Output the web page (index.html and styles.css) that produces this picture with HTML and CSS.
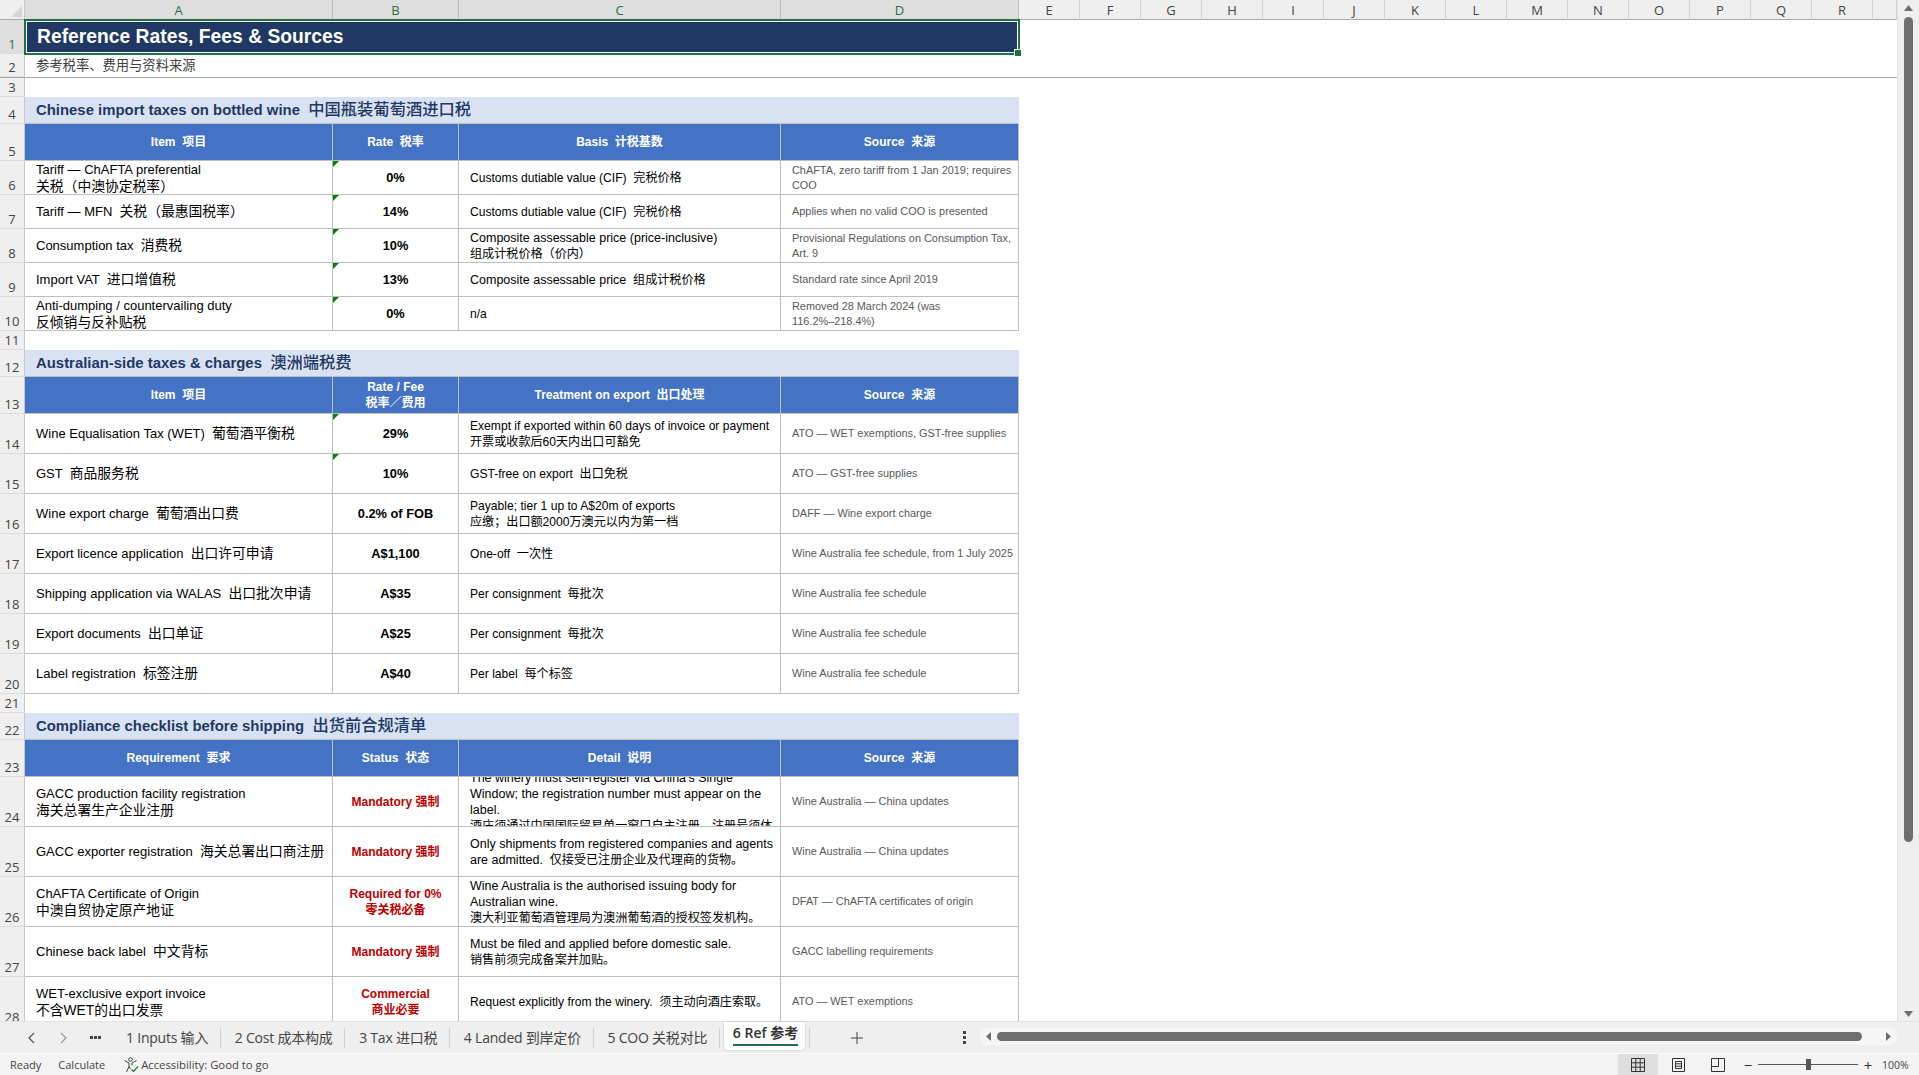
FILE: index.html
```html
<!DOCTYPE html>
<html lang="en">
<head>
  <meta charset="UTF-8">
  <meta name="viewport" content="width=device-width, initial-scale=1.0">
  <title>Reference Rates, Fees &amp; Sources</title>
  <link rel="stylesheet" href="styles.css">
</head>
<body>
  <div class="app">
    <div class="main">
      <div class="sheet">
        <div class="row col-heads">
          <div class="corner"><svg width="11" height="11" viewBox="0 0 11 11"><path d="M11 0V11H0Z" fill="#d4d4d4"/></svg></div>
          <div class="ch active">A</div><div class="ch active">B</div><div class="ch active">C</div><div class="ch active">D</div>
          <div class="ch">E</div><div class="ch">F</div><div class="ch">G</div><div class="ch">H</div><div class="ch">I</div><div class="ch">J</div><div class="ch">K</div><div class="ch">L</div><div class="ch">M</div><div class="ch">N</div><div class="ch">O</div><div class="ch">P</div><div class="ch">Q</div><div class="ch">R</div><div class="ch"></div>
        </div>

        <div class="row h-title">
          <div class="rh active">1</div>
          <div class="cell title"><div>Reference Rates, Fees &amp; Sources</div></div>
        </div>
        <div class="row h-sub">
          <div class="rh">2</div>
          <div class="cell subtitle"><div>参考税率、费用与资料来源</div></div>
        </div>
        <div class="row h-gap"><div class="rh">3</div></div>

        <div class="row h-sec">
          <div class="rh">4</div>
          <div class="cell section"><div>Chinese import taxes on bottled wine  <span class="sec-zh">中国瓶装葡萄酒进口税</span></div></div>
        </div>
        <div class="row h-head">
          <div class="rh">5</div>
          <div class="cell head"><div>Item  项目</div></div>
          <div class="cell head"><div>Rate  税率</div></div>
          <div class="cell head"><div>Basis  计税基数</div></div>
          <div class="cell head"><div>Source  来源</div></div>
        </div>
        <div class="row h-34">
          <div class="rh">6</div>
          <div class="cell item"><div>Tariff — ChAFTA preferential<br><span class="zh">关税（中澳协定税率）</span></div></div>
          <div class="cell rate flag"><div>0%</div></div>
          <div class="cell text"><div>Customs dutiable value (CIF)  完税价格</div></div>
          <div class="cell source"><div>ChAFTA, zero tariff from 1 Jan 2019; requires<br>COO</div></div>
        </div>
        <div class="row h-34">
          <div class="rh">7</div>
          <div class="cell item"><div>Tariff — MFN  <span class="zh">关税（最惠国税率）</span></div></div>
          <div class="cell rate flag"><div>14%</div></div>
          <div class="cell text"><div>Customs dutiable value (CIF)  完税价格</div></div>
          <div class="cell source"><div>Applies when no valid COO is presented</div></div>
        </div>
        <div class="row h-34">
          <div class="rh">8</div>
          <div class="cell item"><div>Consumption tax  <span class="zh">消费税</span></div></div>
          <div class="cell rate flag"><div>10%</div></div>
          <div class="cell text"><div><span class="wide">Composite assessable price (price-inclusive)</span><br>组成计税价格（价内）</div></div>
          <div class="cell source"><div>Provisional Regulations on Consumption Tax,<br>Art. 9</div></div>
        </div>
        <div class="row h-34">
          <div class="rh">9</div>
          <div class="cell item"><div>Import VAT  <span class="zh">进口增值税</span></div></div>
          <div class="cell rate flag"><div>13%</div></div>
          <div class="cell text"><div><span class="wide">Composite assessable price</span>  组成计税价格</div></div>
          <div class="cell source"><div>Standard rate since April 2019</div></div>
        </div>
        <div class="row h-34">
          <div class="rh">10</div>
          <div class="cell item"><div>Anti-dumping / countervailing duty<br><span class="zh">反倾销与反补贴税</span></div></div>
          <div class="cell rate flag"><div>0%</div></div>
          <div class="cell text"><div>n/a</div></div>
          <div class="cell source"><div>Removed 28 March 2024 (was<br>116.2%–218.4%)</div></div>
        </div>
        <div class="row h-gap"><div class="rh">11</div></div>

        <div class="row h-sec">
          <div class="rh">12</div>
          <div class="cell section"><div>Australian-side taxes &amp; charges  <span class="sec-zh">澳洲端税费</span></div></div>
        </div>
        <div class="row h-head">
          <div class="rh">13</div>
          <div class="cell head"><div>Item  项目</div></div>
          <div class="cell head"><div>Rate / Fee<br>税率／费用</div></div>
          <div class="cell head"><div>Treatment on export  出口处理</div></div>
          <div class="cell head"><div>Source  来源</div></div>
        </div>
        <div class="row h-40">
          <div class="rh">14</div>
          <div class="cell item"><div>Wine Equalisation Tax (WET)  <span class="zh">葡萄酒平衡税</span></div></div>
          <div class="cell rate flag"><div>29%</div></div>
          <div class="cell text"><div>Exempt if exported within 60 days of invoice or payment<br>开票或收款后60天内出口可豁免</div></div>
          <div class="cell source"><div>ATO — WET exemptions, GST-free supplies</div></div>
        </div>
        <div class="row h-40">
          <div class="rh">15</div>
          <div class="cell item"><div>GST  <span class="zh">商品服务税</span></div></div>
          <div class="cell rate flag"><div>10%</div></div>
          <div class="cell text"><div>GST-free on export  出口免税</div></div>
          <div class="cell source"><div>ATO — GST-free supplies</div></div>
        </div>
        <div class="row h-40">
          <div class="rh">16</div>
          <div class="cell item"><div>Wine export charge  <span class="zh">葡萄酒出口费</span></div></div>
          <div class="cell rate"><div>0.2% of FOB</div></div>
          <div class="cell text"><div>Payable; tier 1 up to A$20m of exports<br>应缴；出口额2000万澳元以内为第一档</div></div>
          <div class="cell source"><div>DAFF — Wine export charge</div></div>
        </div>
        <div class="row h-40">
          <div class="rh">17</div>
          <div class="cell item"><div>Export licence application  <span class="zh">出口许可申请</span></div></div>
          <div class="cell rate"><div>A$1,100</div></div>
          <div class="cell text"><div>One-off  一次性</div></div>
          <div class="cell source"><div>Wine Australia fee schedule, from 1 July 2025</div></div>
        </div>
        <div class="row h-40">
          <div class="rh">18</div>
          <div class="cell item"><div>Shipping application via WALAS  <span class="zh">出口批次申请</span></div></div>
          <div class="cell rate"><div>A$35</div></div>
          <div class="cell text"><div>Per consignment  每批次</div></div>
          <div class="cell source"><div>Wine Australia fee schedule</div></div>
        </div>
        <div class="row h-40">
          <div class="rh">19</div>
          <div class="cell item"><div>Export documents  <span class="zh">出口单证</span></div></div>
          <div class="cell rate"><div>A$25</div></div>
          <div class="cell text"><div>Per consignment  每批次</div></div>
          <div class="cell source"><div>Wine Australia fee schedule</div></div>
        </div>
        <div class="row h-40">
          <div class="rh">20</div>
          <div class="cell item"><div>Label registration  <span class="zh">标签注册</span></div></div>
          <div class="cell rate"><div>A$40</div></div>
          <div class="cell text"><div>Per label  每个标签</div></div>
          <div class="cell source"><div>Wine Australia fee schedule</div></div>
        </div>
        <div class="row h-gap"><div class="rh">21</div></div>

        <div class="row h-sec">
          <div class="rh">22</div>
          <div class="cell section"><div>Compliance checklist before shipping  <span class="sec-zh">出货前合规清单</span></div></div>
        </div>
        <div class="row h-head">
          <div class="rh">23</div>
          <div class="cell head"><div>Requirement  要求</div></div>
          <div class="cell head"><div>Status  状态</div></div>
          <div class="cell head"><div>Detail  说明</div></div>
          <div class="cell head"><div>Source  来源</div></div>
        </div>
        <div class="row h-50">
          <div class="rh">24</div>
          <div class="cell item"><div>GACC production facility registration<br><span class="zh">海关总署生产企业注册</span></div></div>
          <div class="cell status"><div>Mandatory 强制</div></div>
          <div class="cell text"><div><span class="wide">The winery must self-register via China's Single<br>Window; the registration number must appear on the<br>label.</span><br>酒庄须通过中国国际贸易单一窗口自主注册，注册号须体</div></div>
          <div class="cell source"><div>Wine Australia — China updates</div></div>
        </div>
        <div class="row h-50">
          <div class="rh">25</div>
          <div class="cell item"><div>GACC exporter registration  <span class="zh">海关总署出口商注册</span></div></div>
          <div class="cell status"><div>Mandatory 强制</div></div>
          <div class="cell text"><div><span class="wide">Only shipments from registered companies and agents<br>are admitted.</span>  仅接受已注册企业及代理商的货物。</div></div>
          <div class="cell source"><div>Wine Australia — China updates</div></div>
        </div>
        <div class="row h-50">
          <div class="rh">26</div>
          <div class="cell item"><div>ChAFTA Certificate of Origin<br><span class="zh">中澳自贸协定原产地证</span></div></div>
          <div class="cell status"><div>Required for 0%<br>零关税必备</div></div>
          <div class="cell text"><div><span class="wide">Wine Australia is the authorised issuing body for<br>Australian wine.</span><br>澳大利亚葡萄酒管理局为澳洲葡萄酒的授权签发机构。</div></div>
          <div class="cell source"><div>DFAT — ChAFTA certificates of origin</div></div>
        </div>
        <div class="row h-50">
          <div class="rh">27</div>
          <div class="cell item"><div>Chinese back label  <span class="zh">中文背标</span></div></div>
          <div class="cell status"><div>Mandatory 强制</div></div>
          <div class="cell text"><div><span class="wide">Must be filed and applied before domestic sale.</span><br>销售前须完成备案并加贴。</div></div>
          <div class="cell source"><div>GACC labelling requirements</div></div>
        </div>
        <div class="row h-50">
          <div class="rh">28</div>
          <div class="cell item"><div>WET-exclusive export invoice<br><span class="zh">不含WET的出口发票</span></div></div>
          <div class="cell status"><div>Commercial<br>商业必要</div></div>
          <div class="cell text"><div>Request explicitly from the winery.  须主动向酒庄索取。</div></div>
          <div class="cell source"><div>ATO — WET exemptions</div></div>
        </div>
      </div>

      <div class="vscroll">
        <svg class="arrow-up" width="9" height="6" viewBox="0 0 9 6"><path d="M4.5 0L9 6H0Z" fill="#6e6e6e"/></svg>
        <div class="vthumb"></div>
        <svg class="arrow-down" width="9" height="6" viewBox="0 0 9 6"><path d="M0 0H9L4.5 6Z" fill="#6e6e6e"/></svg>
      </div>
    </div>

    <div class="tabbar">
      <div class="tab-nav">
        <span class="nav-btn"><svg width="7" height="12" viewBox="0 0 7 12"><path d="M6 1L1 6L6 11" fill="none" stroke="#555" stroke-width="1.2"/></svg></span>
        <span class="nav-btn"><svg width="7" height="12" viewBox="0 0 7 12"><path d="M1 1L6 6L1 11" fill="none" stroke="#999" stroke-width="1.2"/></svg></span>
        <span class="nav-btn"><svg width="11" height="3" viewBox="0 0 11 3"><path d="M0 0H3V3H0ZM4 0H7V3H4ZM8 0H11V3H8Z" fill="#444"/></svg></span>
      </div>
      <div class="tab">1 Inputs 输入</div>
      <div class="tab">2 Cost 成本构成</div>
      <div class="tab">3 Tax 进口税</div>
      <div class="tab">4 Landed 到岸定价</div>
      <div class="tab">5 COO 关税对比</div>
      <div class="tab-active"><span>6 Ref 参考</span></div>
      <div class="tab-add"><svg width="12" height="12" viewBox="0 0 12 12"><path d="M6 0V12M0 6H12" stroke="#444" stroke-width="1"/></svg></div>
      <div class="tab-more"><svg width="3" height="13" viewBox="0 0 3 13"><path d="M0 0H3V3H0ZM0 5H3V8H0ZM0 10H3V13H0Z" fill="#444"/></svg></div>
      <div class="hscroll">
        <svg width="5" height="9" viewBox="0 0 5 9"><path d="M5 0V9L0 4.5Z" fill="#6e6e6e"/></svg>
        <div class="hthumb"></div>
        <svg width="5" height="9" viewBox="0 0 5 9"><path d="M0 0L5 4.5L0 9Z" fill="#6e6e6e"/></svg>
      </div>
    </div>

    <div class="statusbar">
      <span class="st-ready">Ready</span>
      <span class="st-calc">Calculate</span>
      <span class="st-access">
        <svg width="17" height="16" viewBox="0 0 17 16"><g fill="none" stroke="#444" stroke-width="1"><circle cx="7.5" cy="2.5" r="1.8"/><path d="M1.5 3.5L6 6V9.5L3.5 15M13.5 3.5L9 6V8.5M6 9.5L7.5 12"/><path d="M8.5 12.5L10.5 14.5L15 9.5" stroke="#1f7145" stroke-width="1.2"/></g></svg>
        Accessibility: Good to go
      </span>
      <div class="views">
        <span class="view on"><svg width="14" height="14" viewBox="0 0 14 14"><path d="M.5.5H13.5V13.5H.5ZM.5 4.8H13.5M.5 9.2H13.5M4.8.5V13.5M9.2.5V13.5" fill="none" stroke="#333"/></svg></span>
        <span class="view"><svg width="13" height="14" viewBox="0 0 13 14"><path d="M.5.5H12.5V13.5H.5Z" fill="none" stroke="#333"/><path d="M3.5 3.5H9.5V10.5H3.5ZM3.5 5.8H9.5M3.5 8.2H9.5" fill="none" stroke="#333"/></svg></span>
        <span class="view"><svg width="14" height="14" viewBox="0 0 14 14"><path d="M.5.5H13.5V13.5H.5ZM.5 8.5H7.5V.5" fill="none" stroke="#333"/></svg></span>
      </div>
      <div class="zoom">
        <span class="zoom-btn">−</span>
        <div class="zoom-track"><div class="zoom-thumb"></div></div>
        <span class="zoom-btn">+</span>
      </div>
      <span class="zoom-val">100%</span>
    </div>
  </div>
</body>
</html>
```

FILE: styles.css
```css
:root {
  --cols: 25px 308px 126px 322px 238px repeat(14, 61px) 1fr;
  --line: #bfbfbf;
  --panel: #efefef;
  --navy: #1f3864;
  --green: #1f7145;
  --cell-font: "Liberation Sans", "Noto Sans CJK SC", sans-serif;
  --ui-font: "Open Sans", "Noto Sans CJK SC", sans-serif;
}

* {
  box-sizing: border-box;
}

html,
body {
  margin: 0;
  height: 100%;
  overflow: hidden;
}

.app {
  display: flex;
  flex-direction: column;
  height: 1075px;
  background-color: var(--panel);
  font-family: var(--cell-font);
}

.main {
  display: flex;
  flex: 1;
  min-height: 0;
}

.sheet {
  flex: 1;
  overflow: hidden;
  background-color: #fff;
}

/* rows */
.row {
  display: grid;
  grid-template-columns: var(--cols);
}

.col-heads { height: 20px; }
.h-title { height: 34px; }
.h-sub { height: 24px; border-bottom: 1px solid #a9a9a9; }
.h-gap { height: 19px; }
.h-sec { height: 27px; }
.h-head { height: 37px; }
.h-34 { height: 34px; }
.h-40 { height: 40px; }
.h-50 { height: 50px; }

/* headings */
.corner {
  display: flex;
  align-items: flex-end;
  justify-content: flex-end;
  padding: 0 2px 2px 0;
  background-color: var(--panel);
  border-right: 1px solid #c8c8c8;
  border-bottom: 1px solid #a9a9a9;
}

.ch {
  display: flex;
  align-items: center;
  justify-content: center;
  background-color: var(--panel);
  border-right: 1px solid #d2d2d2;
  border-bottom: 1px solid #a9a9a9;
  color: #444;
  font: 13px var(--ui-font);
}

.ch.active {
  background-color: #dedede;
  border-right-color: #bdbdbd;
  color: #1f7145;
}

.rh {
  display: flex;
  align-items: flex-end;
  justify-content: center;
  overflow: hidden;
  padding-bottom: 1px;
  background-color: var(--panel);
  border-right: 1px solid #c8c8c8;
  border-bottom: 1px solid #dcdcdc;
  color: #444;
  font: 13px/15px var(--ui-font);
}

.rh.active {
  background-color: #dedede;
  color: #1f7145;
}

/* cells */
.cell {
  display: flex;
  align-items: center;
  overflow: hidden;
  padding: 0 0 0 11px;
  border-right: 1px solid var(--line);
  border-bottom: 1px solid var(--line);
  color: #000;
  font-size: 12.1px;
  line-height: 16px;
  white-space: pre;
}

.title {
  position: relative;
  grid-column: 2 / 6;
  overflow: visible;
  padding-left: 12px;
  border: none;
  background-color: var(--navy);
  color: #fff;
  font-size: 19.3px;
  font-weight: bold;
}

/* selection box round the merged A1:D1 */
.title::after {
  content: "";
  position: absolute;
  top: -1px;
  left: -1px;
  right: -1px;
  bottom: -1px;
  border: 2px solid var(--green);
  box-shadow: inset 0 0 0 1px #fff;
}

.title::before {
  content: "";
  position: absolute;
  right: -3px;
  bottom: -3px;
  z-index: 1;
  width: 6px;
  height: 6px;
  background-color: var(--green);
  border: 1px solid #fff;
}

.subtitle {
  grid-column: 2 / 6;
  border: none;
  color: #404040;
  font-size: 13.3px;
}

.section {
  grid-column: 2 / 6;
  padding-bottom: 2px;
  border-right: none;
  background-color: #d9e2f3;
  color: var(--navy);
  font-size: 14.9px;
  font-weight: bold;
}

.sec-zh {
  font-size: 16.3px;
  font-weight: 500;
}

.head {
  justify-content: center;
  padding: 0;
  background-color: #4472c4;
  color: #fff;
  font-size: 12px;
  font-weight: bold;
  text-align: center;
}

.item {
  font-size: 13px;
  line-height: 17px;
}

.zh {
  font-size: 13.8px;
}

.wide {
  font-size: 12.5px;
}

.rate {
  justify-content: center;
  padding: 0;
  font-size: 12.8px;
  font-weight: bold;
  text-align: center;
}

.status {
  justify-content: center;
  padding: 0;
  color: #c00000;
  font-size: 12px;
  font-weight: bold;
  text-align: center;
}

.source {
  color: #595959;
  font-size: 10.9px;
  line-height: 15px;
}

/* green error marker in the corner of a cell */
.flag {
  position: relative;
}

.flag::before {
  content: "";
  position: absolute;
  top: 0;
  left: 0;
  border-top: 6px solid #0a7d0a;
  border-right: 6px solid transparent;
}

/* scrollbars */
.vscroll {
  display: flex;
  flex-direction: column;
  align-items: center;
  width: 22px;
  padding-top: 5px;
  border-left: 1px solid #e2e2e2;
}

.vthumb {
  width: 9px;
  height: 825px;
  margin-top: 6px;
  background-color: #6e6e6e;
  border-radius: 5px;
}

.arrow-down {
  margin-top: auto;
  margin-bottom: 4px;
}

/* sheet tabs */
.tabbar {
  display: flex;
  flex: 0 0 32px;
  align-items: center;
  border-top: 1px solid #e2e2e2;
  color: #444;
  font: 14px var(--ui-font);
}

.tab-nav {
  display: flex;
  width: 112px;
  padding-left: 15px;
}

.nav-btn {
  display: flex;
  align-items: center;
  justify-content: center;
  width: 32px;
}

.tab {
  padding: 0 11.6px 0 14px;
  border-right: 1px solid #cfcfcf;
  letter-spacing: -0.22px;
  line-height: 20px;
  white-space: nowrap;
}

.tab-active {
  align-self: flex-start;
  width: 81px;
  height: 28px;
  margin: 0 4px;
  padding-left: 9px;
  background-color: #fff;
  border-radius: 0 0 4px 4px;
  box-shadow: 0 0 2px rgba(0, 0, 0, 0.25);
  color: #333;
  font-weight: 600;
  white-space: nowrap;
}

.tab-active span {
  display: inline-block;
  height: 24px;
  border-bottom: 2px solid var(--green);
  line-height: 22px;
}

.tab-add {
  display: flex;
  align-items: center;
  justify-content: center;
  width: 96px;
  height: 20px;
  border-left: 1px solid #cfcfcf;
}

.tab-more {
  display: flex;
  justify-content: flex-end;
  width: 75px;
  padding-right: 14px;
}

.hscroll {
  display: flex;
  flex: 1;
  align-self: flex-start;
  align-items: center;
  height: 17px;
  margin: 6px 22px 0 0;
  padding: 0 6px;
  background-color: #f6f6f6;
  border-radius: 8px;
}

.hthumb {
  flex: 1;
  height: 9px;
  margin: 0 24px 0 6px;
  background-color: #6e6e6e;
  border-radius: 5px;
}

/* status bar */
.statusbar {
  display: flex;
  flex: 0 0 22px;
  align-items: center;
  background-color: #f3f3f3;
  border-top: 1px solid #fafafa;
  color: #444;
  font: 11px var(--ui-font);
}

.st-ready {
  margin-left: 10px;
}

.st-calc {
  margin-left: 17px;
}

.st-access {
  display: flex;
  align-items: center;
  gap: 1px;
  margin-left: 18px;
  font-size: 11.3px;
}

.views {
  display: flex;
  align-self: stretch;
  margin-left: auto;
}

.view {
  display: flex;
  align-items: center;
  justify-content: center;
  width: 40px;
}

.view.on {
  background-color: #dedede;
}

.zoom {
  display: flex;
  align-items: center;
}

.zoom-btn {
  width: 20px;
  color: #333;
  font-size: 15px;
  line-height: 18px;
  text-align: center;
}

.zoom-track {
  position: relative;
  width: 100px;
  height: 1px;
  background-color: #555;
}

.zoom-thumb {
  position: absolute;
  top: -5px;
  left: 48px;
  width: 5px;
  height: 11px;
  background-color: #555;
}

.zoom-val {
  width: 37px;
  margin-left: 4px;
  font-size: 10.5px;
}
```
